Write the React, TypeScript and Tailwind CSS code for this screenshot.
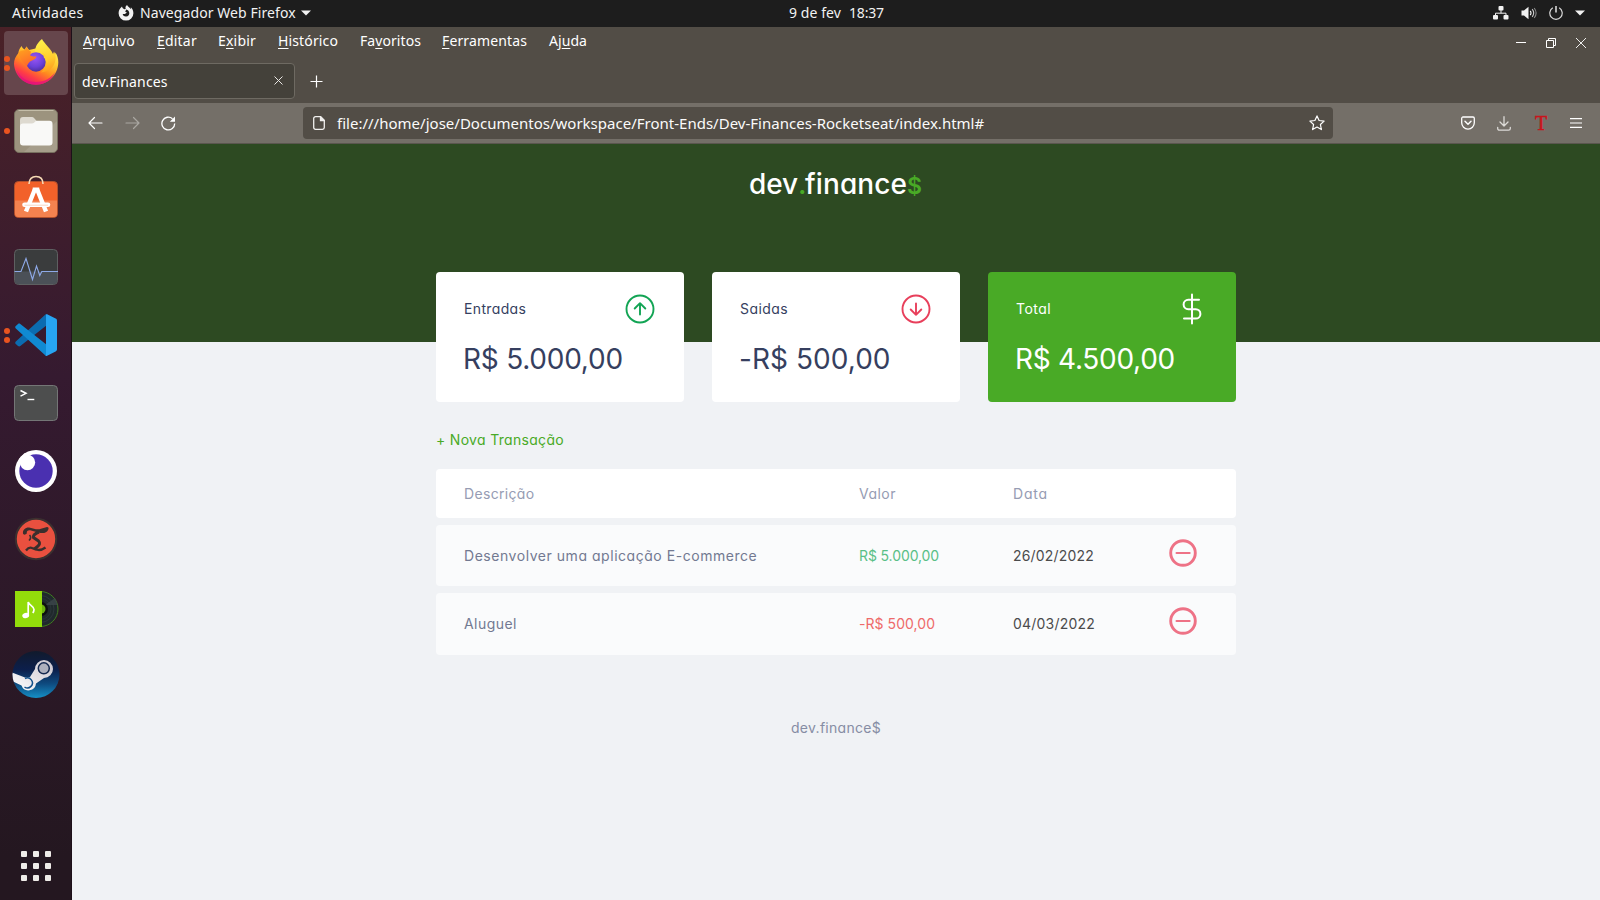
import type { ReactNode } from "react";

/* ---------- Dock icons ---------- */

function FirefoxIcon() {
  return (
    <svg width="46" height="48" viewBox="-1 -1 46 48">
      <defs>
        <linearGradient id="ffBody" x1="0.85" y1="0.1" x2="0.3" y2="1">
          <stop offset="0" stopColor="#fff14f" />
          <stop offset="0.3" stopColor="#ffc52f" />
          <stop offset="0.55" stopColor="#ff8a1f" />
          <stop offset="0.78" stopColor="#ff3f44" />
          <stop offset="1" stopColor="#e6127c" />
        </linearGradient>
        <linearGradient id="ffFlame" x1="0.4" y1="0" x2="0.6" y2="1">
          <stop offset="0" stopColor="#fff24a" />
          <stop offset="0.6" stopColor="#ffcd2e" />
          <stop offset="1" stopColor="#ff9a1e" />
        </linearGradient>
        <linearGradient id="ffHead" x1="0" y1="0" x2="0.4" y2="1">
          <stop offset="0" stopColor="#ffab1c" />
          <stop offset="1" stopColor="#ff6a2a" />
        </linearGradient>
        <radialGradient id="ffGlobe" cx="0.45" cy="0.3" r="0.75">
          <stop offset="0" stopColor="#9a55f5" />
          <stop offset="0.6" stopColor="#6a41d8" />
          <stop offset="1" stopColor="#4a2b96" />
        </radialGradient>
      </defs>
      <path d="M7.700 7C5.500 9.500 4.600 11.500 4.400 14 1.400 17.500 0 21 0 25 .8 37 10 45.700 22 45.700S44 36 44.300 23.500c0-4-1-7.500-3-10l-.4 4L28 8 15 11l-2.500-3.500-1.800 3C9 9.500 8 8.500 7.700 7z" fill="url(#ffBody)" />
      <path d="M28 0c-6 5-7.500 9.500-6.500 15 5 .5 9.500 4 9.500 9.500 0 4-1.500 7-4 9 8-.5 13.500-5.500 14.500-13 .5-3-.2-6-1.500-8l-1 2.500C37.500 11 34 8 32 5.500 30.500 3.500 29 2 28 0z" fill="url(#ffFlame)" />
      <circle cx="22" cy="23" r="9.700" fill="url(#ffGlobe)" />
      <path d="M28 13.800c4 1.500 6.300 5.500 5.300 10.500-.5-3-2-4.500-3.500-5.500.5-2 0-3.500-1.800-5z" fill="#ffd02c" />
      <path d="M4.400 14c2-2.500 4-3 6.300-2.700L12.500 7.500c1.200 2.500 2.500 4 4.500 5.200l-.8 3.800c2 1 4 1 6.300 1-.5 2.500-3 3.500-5 4.200-2 .8-3.500 2.500-4.500 5.300C9 25 5.500 19 4.400 14z" fill="url(#ffHead)" />
      <path d="M2.500 31C7 40 14 43 22 43c8.500 0 15.500-4 19-10-2.500 8-10 12.700-19 12.700C12.500 45.700 5 40 2.500 31z" fill="#e3107e" opacity="0.75" />
    </svg>
  );
}

function FilesIcon() {
  return (
    <svg width="46" height="46" viewBox="-1 -1 46 46">
      <rect x="0.500" y="0.500" width="43" height="43" rx="4.500" fill="#9c937e" stroke="#77705f" />
      <path d="M43 12v26.500a4.500 4.500 0 0 1-4.500 4.500H10z" fill="#a69e8b" />
      <path d="M4.500 1.500h35" stroke="#c4bda8" />
      <path d="M6 17V11a3 3 0 0 1 3-3h9a2.500 2.500 0 0 1 2 1l2.500 2.800V17z" fill="#dedad0" />
      <path d="M6 17.500c0-2 1-3 3-3h9c1.500 0 2-.5 2.800-1.400.7-.8 1.500-1.300 2.700-1.300H35.500a3 3 0 0 1 3 3V33.500a3 3 0 0 1-3 3H9a3 3 0 0 1-3-3z" fill="#f9f9f7" />
    </svg>
  );
}

function SoftwareIcon() {
  return (
    <svg width="46" height="46" viewBox="-1 -1 46 46">
      <rect x="0.500" y="6.500" width="43" height="36" rx="4" fill="#f2612a" stroke="#b1502c" />
      <path d="M1 25.500h42V38.500a3.500 3.500 0 0 1-3.500 3.500H4.500A3.500 3.500 0 0 1 1 38.500z" fill="#f4824f" />
      <path d="M15 9c0-5 3-7.500 7-7.500S29 4 29 9" fill="none" stroke="#f5d9b4" strokeWidth="1.600" />
      <path d="M12 36.500L20.800 14.500M32 36.500L23.200 14.500" fill="none" stroke="#fff" strokeWidth="4.400" />
      <path d="M18.700 12.500h6.600v4h-6.600z" fill="#fff" />
      <path d="M10.500 29.800h23.500" stroke="#fff" strokeWidth="4.600" strokeLinecap="round" />
      <path d="M10.500 30.200h23.500" stroke="#f8d5c3" strokeWidth="1" />
    </svg>
  );
}

function MonitorIcon() {
  return (
    <svg width="46" height="38" viewBox="-1 -1 46 38">
      <rect x="0.500" y="0.500" width="43" height="35" rx="4" fill="#3a3c3d" stroke="#5e6061" />
      <path d="M1 22.500h42V31.500a3.500 3.500 0 0 1-3.500 3.500h-35A3.500 3.500 0 0 1 1 31.500z" fill="#4b5057" />
      <path d="M.5 22.500H7L12 9.500l6.500 21 4-13.500 3.300 9.500 2-4H44" fill="none" stroke="#8ea9e8" strokeWidth="1.100" />
    </svg>
  );
}

function CodeIcon() {
  return (
    <svg width="42" height="42" viewBox="0 0 42 42">
      <path d="M31 0L.8 27.500c-.8.8-.8 1.800 0 2.500L3 32c.7.600 1.600.6 2.300.1L32 11z" fill="#0b6cb0" />
      <path d="M31 42L.8 14.500c-.8-.8-.8-1.800 0-2.500L3 10c.7-.6 1.600-.6 2.300-.1L32 31z" fill="#108ad2" />
      <path d="M31 .2c.3-.1.700-.1 1.100.1l8.500 4.200c.9.400 1.400 1.200 1.400 2.200v28.600c0 1-.5 1.800-1.400 2.200l-8.500 4.200c-.7.300-1.100.3-1.600.100.500-.2.500-.8.500-1.500V1.500c0-.6 0-1.100 0-1.300z" fill="#27a5f2" />
    </svg>
  );
}

function TerminalIcon() {
  return (
    <svg width="46" height="38" viewBox="-1 -1 46 38">
      <rect x="0.500" y="0.500" width="43" height="35" rx="4" fill="#4d4e4e" stroke="#747676" />
      <path d="M6.500 5.500l5.500 2.800-5.500 2.800" fill="none" stroke="#fff" strokeWidth="1.500" />
      <path d="M13.500 14.500h6.800" stroke="#fff" strokeWidth="1.400" />
    </svg>
  );
}

function InsomniaIcon() {
  return (
    <svg width="42" height="42" viewBox="0 0 42 42">
      <circle cx="21" cy="21" r="21" fill="#fff" />
      <circle cx="21" cy="21" r="16.700" fill="#4a30b0" />
      <circle cx="12.500" cy="12.500" r="7.700" fill="#fff" />
      <path d="M4 14L14 4l-4-1-6 6z" fill="#fff" />
    </svg>
  );
}

function TermiusIcon() {
  return (
    <svg width="44" height="44" viewBox="-22 -22 44 44">
      <circle r="20.200" fill="#e9503f" stroke="#3b3030" strokeWidth="2" />
      <path d="M-13-5.500c-.5-4 3-6.500 7-5.800 4 .8 7 2.500 11 1l6-1.700c1.500 0 2 1 1.300 2.500-1.500 3.800-5.300 4-9.300 3.200l-8-2.200c-3-.6-4.500.5-4.200 3-1.300 1.500-3.500 1.500-3.800 0z" fill="#3a2f2d" />
      <path d="M3-7c-4 1.500-6 3.500-5.500 5.500L2.500 2c2 2 1 4-1 5.500l-3 2.500" fill="none" stroke="#3a2f2d" strokeWidth="3" />
      <path d="M-10 11.500c2-2.500 4-3.500 6-2.500 4 1.800 8 3.500 13.500-.5" fill="none" stroke="#3a2f2d" strokeWidth="2.400" />
      <path d="M-6.500-4c1.500 1.500 1.500 3.500-.5 5.500" fill="none" stroke="#3a2f2d" strokeWidth="1.600" />
    </svg>
  );
}

function MusicIcon() {
  return (
    <svg width="44" height="38" viewBox="0 0 44 38">
      <circle cx="25.500" cy="19" r="17.500" fill="#20292c" stroke="#3f7d1f" strokeWidth="1" />
      <circle cx="25.500" cy="19" r="13.500" fill="none" stroke="#303b40" strokeWidth="0.800" />
      <circle cx="25.500" cy="19" r="10.500" fill="none" stroke="#2b363a" strokeWidth="0.800" />
      <path d="M30 15l10-7a18 18 0 0 1 2.500 7z" fill="#3c464b" opacity="0.8" />
      <circle cx="26" cy="19" r="7" fill="#0d0f0f" />
      <circle cx="26" cy="19" r="4.500" fill="#6db50d" />
      <rect x="0" y="1" width="27" height="36" fill="#93dc0b" />
      <path d="M13.200 25V12c1 3.500 5.800 4 5.800 7.500 0 1.500-.5 2.500-1.200 3.500" fill="none" stroke="#fff" strokeWidth="1.700" />
      <ellipse cx="10.700" cy="25.500" rx="3.500" ry="2.600" fill="#fff" transform="rotate(-18 10.700 25.500)" />
    </svg>
  );
}

function SteamIcon() {
  return (
    <svg width="48" height="47" viewBox="0 0 48 47">
      <defs>
        <linearGradient id="steamBg" x1="0" y1="0" x2="0" y2="1">
          <stop offset="0" stopColor="#111a2c" />
          <stop offset="0.4" stopColor="#0c1f4c" />
          <stop offset="0.7" stopColor="#0e4b80" />
          <stop offset="1" stopColor="#1590c6" />
        </linearGradient>
        <linearGradient id="steamArm" x1="0" y1="1" x2="1" y2="0">
          <stop offset="0" stopColor="#fff" />
          <stop offset="1" stopColor="#c9c4cd" />
        </linearGradient>
        <clipPath id="steamClip"><circle cx="24" cy="23.500" r="23.500" /></clipPath>
      </defs>
      <g clipPath="url(#steamClip)">
        <rect width="48" height="47" fill="url(#steamBg)" />
        <path d="M0 21.500l13 5 5-.5 5-8a9 9 0 1 1 9 9l-8 5.500a7.500 7.500 0 0 1-14.500 2L0 30z" fill="url(#steamArm)" />
        <circle cx="31.800" cy="17.300" r="5.500" fill="#aeb0bd" stroke="#14284f" strokeWidth="1.500" />
        <path d="M13 27.500a5 5 0 1 1-.5 8.500" fill="none" stroke="#12508a" strokeWidth="1.500" />
      </g>
    </svg>
  );
}

function AppsGridIcon() {
  const steps = [0, 12, 24];
  return (
    <svg width="30" height="30" viewBox="0 0 30 30" fill="#efece8">
      {steps.map((y) => steps.map((x) => <rect key={x + "-" + y} x={x} y={y} width="6" height="6" rx="1" />))}
    </svg>
  );
}

function DockItem({ children, dots = 0, active = false }: { children: ReactNode; dots?: number; active?: boolean }) {
  return (
    <div className={active ? "relative flex h-16 w-16 items-center justify-center rounded bg-[#66464c]" : "relative flex h-16 w-16 items-center justify-center"}>
      {dots > 0 && (
        <div className="absolute inset-y-0 left-0 flex flex-col justify-center gap-[3px]">
          {Array.from({ length: dots }, (_, i) => (
            <span key={i} className="h-[6px] w-[6px] rounded-full bg-[#e95420]" />
          ))}
        </div>
      )}
      {children}
    </div>
  );
}

function Dock() {
  return (
    <aside className="flex w-[72px] shrink-0 flex-col items-center justify-between border-r border-[#1d1019] bg-linear-to-b from-[#4a2127] from-0% via-[#351a30] via-40% to-[#241720] to-95% pt-1 pb-[19px]">
      <div className="flex flex-col gap-1">
        <DockItem dots={2} active><div className="-mt-[2px]"><FirefoxIcon /></div></DockItem>
        <DockItem dots={1}><FilesIcon /></DockItem>
        <DockItem><div className="-mt-[5px]"><SoftwareIcon /></div></DockItem>
        <DockItem><MonitorIcon /></DockItem>
        <DockItem dots={2}><CodeIcon /></DockItem>
        <DockItem><TerminalIcon /></DockItem>
        <DockItem><InsomniaIcon /></DockItem>
        <DockItem><TermiusIcon /></DockItem>
        <DockItem><div className="mt-1 ml-[2px]"><MusicIcon /></div></DockItem>
        <DockItem><div className="-mt-[2px]"><SteamIcon /></div></DockItem>
      </div>
      <AppsGridIcon />
    </aside>
  );
}

/* ---------- Desktop top bar ---------- */

function TopBar() {
  return (
    <div className="grid h-[27px] shrink-0 grid-cols-3 items-center bg-[#1d1d1d] pb-px font-['Noto_Sans',sans-serif] text-[14px] leading-[26px] text-[#f2f2f2]">
      <div className="flex items-center pl-3">
        <span className="w-[106px] tracking-[0.35px]">Atividades</span>
        <svg className="mr-[6px]" width="16" height="16" viewBox="0 0 16 16">
          <path d="M9 0c-1.500 1.200-1.800 2.400-1.300 4l-1.500.3L4.600 3 4 1.600C1.800 3.300.6 5.700.6 8.200a7.400 7.400 0 1 0 14.800 0c0-2.400-1-4.500-2.600-5.900l.3 2C12 2.500 10 2 9 0zM8.200 4.600c1.900.5 3.100 1.900 3.100 3.700a3.400 3.400 0 0 1-6.700.7l2.300.1 2-1.600-1.700-.8z" fill="#f2f2f2" fillRule="evenodd" />
        </svg>
        <span className="tracking-[0.080px]">Navegador Web Firefox</span>
        <svg className="ml-[5px]" width="10" height="6" viewBox="0 0 10 6"><path d="M0 .5h10L5 5.500z" fill="#f2f2f2" /></svg>
      </div>
      <div className="flex justify-center gap-2 pl-[73px]">
        <span className="tracking-[0.080px]">9 de fev</span>
        <span className="tracking-[-0.160px]">18:37</span>
      </div>
      <div className="flex items-center justify-end gap-[12px] pr-[15px]">
        <svg width="16" height="14" viewBox="0 0 16 14" fill="#f2f2f2">
          <rect x="5.500" y="0" width="5" height="4.500" rx="1" />
          <rect x="0" y="9" width="5" height="4.500" rx="1" />
          <rect x="10.500" y="9" width="5" height="4.500" rx="1" />
          <path d="M8 4v3.200M2.500 9.500V7.200h10.500v2.300" fill="none" stroke="#f2f2f2" />
        </svg>
        <svg width="16" height="14" viewBox="0 0 16 14" fill="none" stroke="#f2f2f2" strokeWidth="1.100">
          <path d="M.5 4.500h2.500L7.500.8v12.400L3 9.500H.5z" fill="#f2f2f2" stroke="none" />
          <path d="M9.200 4.800c1 1.300 1 3.100 0 4.400" />
          <path d="M11.200 3.200c1.800 2.300 1.800 5.300 0 7.600" stroke="#c8c8c8" />
          <path d="M13.200 2c2.300 3 2.300 7 0 10" stroke="#888" />
        </svg>
        <svg width="14" height="14" viewBox="0 0 14 14" fill="none" stroke="#d8d8d8" strokeWidth="1.200">
          <path d="M3.800 1.800a6.200 6.200 0 1 0 6.400 0" />
          <path d="M7 0v6.500" stroke="#f2f2f2" strokeWidth="1.400" />
        </svg>
        <svg width="10" height="6" viewBox="0 0 10 6"><path d="M0 .5h10L5 5.500z" fill="#f2f2f2" /></svg>
      </div>
    </div>
  );
}

/* ---------- Browser chrome ---------- */

function Key({ children }: { children: ReactNode }) {
  return <span className="underline decoration-1 underline-offset-[2px] [text-decoration-skip-ink:none]">{children}</span>;
}

function MenuBar() {
  return (
    <div className="flex h-[27px] items-center justify-between pr-[14px] pl-[11px] text-[14px] leading-[27px] text-white">
      <div className="flex">
        <span className="w-[74px] tracking-[0.15px]"><Key>A</Key>rquivo</span>
        <span className="w-[61px] tracking-[0.2px]"><Key>E</Key>ditar</span>
        <span className="w-[60px] tracking-[0.2px]">E<Key>x</Key>ibir</span>
        <span className="w-[82px] tracking-[0.13px]"><Key>H</Key>istórico</span>
        <span className="w-[82px] tracking-[0.07px]">Fa<Key>v</Key>oritos</span>
        <span className="w-[107px] tracking-[0.13px]"><Key>F</Key>erramentas</span>
        <span className="tracking-[0.06px]">Aj<Key>u</Key>da</span>
      </div>
      <div className="flex gap-[20px] pt-1">
        <svg width="10" height="10" viewBox="0 0 10 10"><path d="M0 4.500h10" stroke="#fff" /></svg>
        <svg width="10" height="10" viewBox="0 0 10 10" fill="none" stroke="#fff">
          <path d="M.5 2.500h7v7h-7z" /><path d="M2.500 2.500v-2h7v7h-2" />
        </svg>
        <svg width="10" height="10" viewBox="0 0 10 10"><path d="M0 0l10 10M10 0L0 10" stroke="#fff" strokeWidth="0.900" /></svg>
      </div>
    </div>
  );
}

function TabStrip() {
  return (
    <div className="flex h-[49px] items-center pl-[2px] pt-[5px]">
      <div className="-mt-[1px] flex h-9 w-[221px] items-center justify-between rounded border border-[#6e6a62] bg-[#44413a] pr-[11px] pl-[7px]">
        <span className="pt-[2px] text-[14px] leading-5 tracking-[0.15px] text-white">dev.Finances</span>
        <svg width="9" height="9" viewBox="0 0 9 9"><path d="M.5.5l8 8M8.500.5l-8 8" stroke="#e8e6e3" /></svg>
      </div>
      <svg className="ml-[15px]" width="13" height="13" viewBox="0 0 13 13"><path d="M6.500.5v12M.5 6.500h12" stroke="#fff" strokeWidth="1.200" /></svg>
    </div>
  );
}

function NavBar() {
  return (
    <div className="flex h-[41px] items-center border-b border-[#5a564f] bg-[#746f68] pr-[18px] pl-4">
      <div className="flex items-center gap-[21px]">
        <svg className="mr-px" width="15" height="14" viewBox="0 0 15 14" fill="none" stroke="#fff" strokeWidth="1.200" strokeLinecap="round" strokeLinejoin="round">
          <path d="M14 7H1M6.500 1.500L1 7l5.500 5.500" />
        </svg>
        <svg width="15" height="14" viewBox="0 0 15 14" fill="none" stroke="#aaa7a2" strokeWidth="1.200" strokeLinecap="round" strokeLinejoin="round">
          <path d="M1 7h13M8.500 1.500L14 7l-5.500 5.500" />
        </svg>
        <svg width="15" height="15" viewBox="0 0 15 15" fill="none" stroke="#fff" strokeWidth="1.300">
          <path d="M13.700 7.500A6.400 6.400 0 1 1 11.500 2.700" />
          <path d="M14 .6v5.200H8.800z" fill="#fff" stroke="none" />
        </svg>
      </div>
      <div className="ml-[127px] flex h-8 w-[1030px] items-center rounded bg-[#524d46] pr-2 pl-[10px]">
        <svg width="12" height="14" viewBox="0 0 12 14" fill="none" stroke="#f0efed" strokeWidth="1.300">
          <path d="M2.500.7h5L11.300 4.500v7a1.800 1.800 0 0 1-1.800 1.800h-7A1.800 1.800 0 0 1 .7 11.500v-9A1.800 1.800 0 0 1 2.500.7z" />
          <path d="M7.500.7v3.800h3.800z" fill="#f0efed" />
        </svg>
        <span className="ml-3 grow text-[15px] leading-8 tracking-[0.01px] text-[#fbfbfa]">
          file:///home/jose/Documentos/workspace/Front-Ends/Dev-Finances-Rocketseat/index.html#
        </span>
        <svg width="16" height="16" viewBox="0 0 16 16" fill="none" stroke="#fff" strokeWidth="1.200" strokeLinejoin="round">
          <path d="M8 .9l2.100 4.600 5 .6-3.700 3.400 1 5.100L8 12.100l-4.400 2.500 1-5.100L.9 6.100l5-.6z" />
        </svg>
      </div>
      <div className="flex grow items-center justify-end">
        <svg width="14" height="14" viewBox="0 0 14 14" fill="none" stroke="#fff" strokeWidth="1.300" strokeLinecap="round" strokeLinejoin="round">
          <path d="M2 1h10a1.300 1.300 0 0 1 1.300 1.300V6.800a6.300 6.300 0 0 1-12.600 0V2.300A1.300 1.300 0 0 1 2 1z" />
          <path d="M4 5.300l3 2.900 3-2.900" strokeWidth="1.500" />
        </svg>
        <svg className="ml-[22px]" width="14" height="15" viewBox="0 0 14 15" fill="none" stroke="#dcdad7" strokeWidth="1.300" strokeLinecap="round" strokeLinejoin="round">
          <path d="M7 .7v9M3 6l4 4 4-4M.7 11.500v1a1.700 1.700 0 0 0 1.700 1.700h9.200a1.700 1.700 0 0 0 1.700-1.700v-1" />
        </svg>
        <span className="ml-[21px] w-[18px] scale-x-90 text-center font-['Liberation_Serif',serif] text-[22px] leading-6 font-normal text-[#c8141c] [-webkit-text-stroke:0.600px_#c8141c]">T</span>
        <svg className="ml-[20px]" width="12" height="10" viewBox="0 0 12 10"><path d="M0 .6h12M0 5h12M0 9.400h12" stroke="#fff" strokeWidth="1.200" /></svg>
      </div>
    </div>
  );
}

/* ---------- dev.finance$ page ---------- */

function ArrowCircle({ color, down = false }: { color: string; down?: boolean }) {
  return (
    <svg className="mr-px" width="30" height="30" viewBox="0 0 30 30" fill="none" stroke={color} strokeWidth="1.900" strokeLinecap="round" strokeLinejoin="round">
      <circle cx="15" cy="15" r="13.500" />
      <path d={down ? "M15 9.500v11.300M9.700 15.500l5.300 5.300 5.300-5.300" : "M15 20.500V9.200M9.700 14.500L15 9.200l5.300 5.300"} />
    </svg>
  );
}

function DollarIcon() {
  return (
    <svg className="mr-[6px]" width="20" height="32" viewBox="0 0 20 32" fill="none" stroke="#fff" strokeWidth="2" strokeLinecap="round">
      <path d="M10 1.500v29M17 6.800H6.300a4.700 4.700 0 0 0 0 9.400h7.400a4.700 4.700 0 0 1 0 9.400H2" />
    </svg>
  );
}

function Card({ title, amount, icon, titleClass, amountClass, tone }: {
  title: string; amount: string; icon: ReactNode; titleClass: string; amountClass: string; tone: string;
}) {
  return (
    <div className={"h-[130px] w-[248px] rounded px-7 pt-[21px] " + tone}>
      <div className="flex h-8 items-center justify-between">
        <h3 className={"text-[14px] leading-8 " + titleClass}>{title}</h3>
        {icon}
      </div>
      <p className={"mt-3 -ml-px text-[28px] leading-[44px] font-normal whitespace-nowrap " + amountClass}>{amount}</p>
    </div>
  );
}

function RemoveIcon() {
  return (
    <svg width="28" height="28" viewBox="0 0 28 28" fill="none" stroke="#ee7286" strokeLinecap="round">
      <circle cx="14" cy="14" r="12.300" strokeWidth="2.900" />
      <path d="M7.500 14h13.200" strokeWidth="2" />
    </svg>
  );
}

const columns = "grid grid-cols-[395px_154px_156px_28px] items-center rounded px-7 pb-px";

function DevFinances() {
  return (
    <div className="flex grow flex-col bg-[#f0f2f5] font-['Inter',sans-serif] text-[14px] [font-feature-settings:'cv11']">
      <header className="flex h-[198px] shrink-0 justify-center bg-[#2d4a22] pt-5">
        <div className="-ml-px flex h-10 items-baseline text-[28px] leading-10 font-medium text-white">
          <span className="w-[50px] tracking-[-0.1px]">dev</span>
          <span className="w-[6px] text-[#49aa26]"><span className="-ml-[1px]">.</span></span>
          <span className="tracking-[0.090px]">finance</span>
          <span className="text-[23px] font-semibold text-[#49aa26]">$</span>
        </div>
      </header>
      <main className="mx-auto -mt-[70px] w-[800px]">
        <section className="flex justify-between">
          <Card title="Entradas" amount="R$ 5.000,00" icon={<ArrowCircle color="#12a454" />} titleClass="tracking-[0.35px]" amountClass="tracking-[-0.24px]" tone="bg-white text-[#363f5f]" />
          <Card title="Saidas" amount="-R$ 500,00" icon={<ArrowCircle color="#e83f5b" down />} titleClass="tracking-[0.42px]" amountClass="tracking-[0.05px]" tone="bg-white text-[#363f5f]" />
          <Card title="Total" amount="R$ 4.500,00" icon={<DollarIcon />} titleClass="tracking-[0.45px]" amountClass="tracking-[-0.28px]" tone="bg-[#49aa26] text-white" />
        </section>
        <section className="pt-[26px]">
          <a className="block leading-6 tracking-[0.31px] text-[#49aa26]">+ Nova Transação</a>
          <div className="mt-[17px] flex flex-col gap-[7px]">
            <div className={columns + " h-[49px] bg-white text-[#969cb3]"}>
              <span className="tracking-[0.33px]">Descrição</span>
              <span className="tracking-[0.48px]">Valor</span>
              <span className="tracking-[0.8px]">Data</span>
            </div>
            <div className={columns + " h-[61px] bg-[#fafbfc]"}>
              <span className="tracking-[0.54px] text-[#727991]">Desenvolver uma aplicação E-commerce</span>
              <span className="tracking-[-0.11px] text-[#59bf87]">R$ 5.000,00</span>
              <span className="tracking-[0.19px] text-[#4b4b4c]">26/02/2022</span>
              <div className="-mt-[4px]"><RemoveIcon /></div>
            </div>
            <div className={columns + " h-[62px] bg-[#fafbfc]"}>
              <span className="tracking-[0.46px] text-[#727991]">Aluguel</span>
              <span className="tracking-[0.05px] text-[#ee6a6a]">-R$ 500,00</span>
              <span className="tracking-[0.21px] text-[#4b4b4c]">04/03/2022</span>
              <div className="-mt-[5px]"><RemoveIcon /></div>
            </div>
          </div>
        </section>
      </main>
      <footer className="pt-[61px] text-center leading-6 tracking-[0.29px] text-[#868da4]">dev.finance$</footer>
    </div>
  );
}

export default function App() {
  return (
    <div className="flex h-[900px] w-[1600px] flex-col overflow-hidden">
      <TopBar />
      <div className="flex grow">
        <Dock />
        <div className="flex grow flex-col">
          <div className="bg-[#524d46] font-['Noto_Sans',sans-serif]">
            <MenuBar />
            <TabStrip />
            <NavBar />
          </div>
          <DevFinances />
        </div>
      </div>
    </div>
  );
}
